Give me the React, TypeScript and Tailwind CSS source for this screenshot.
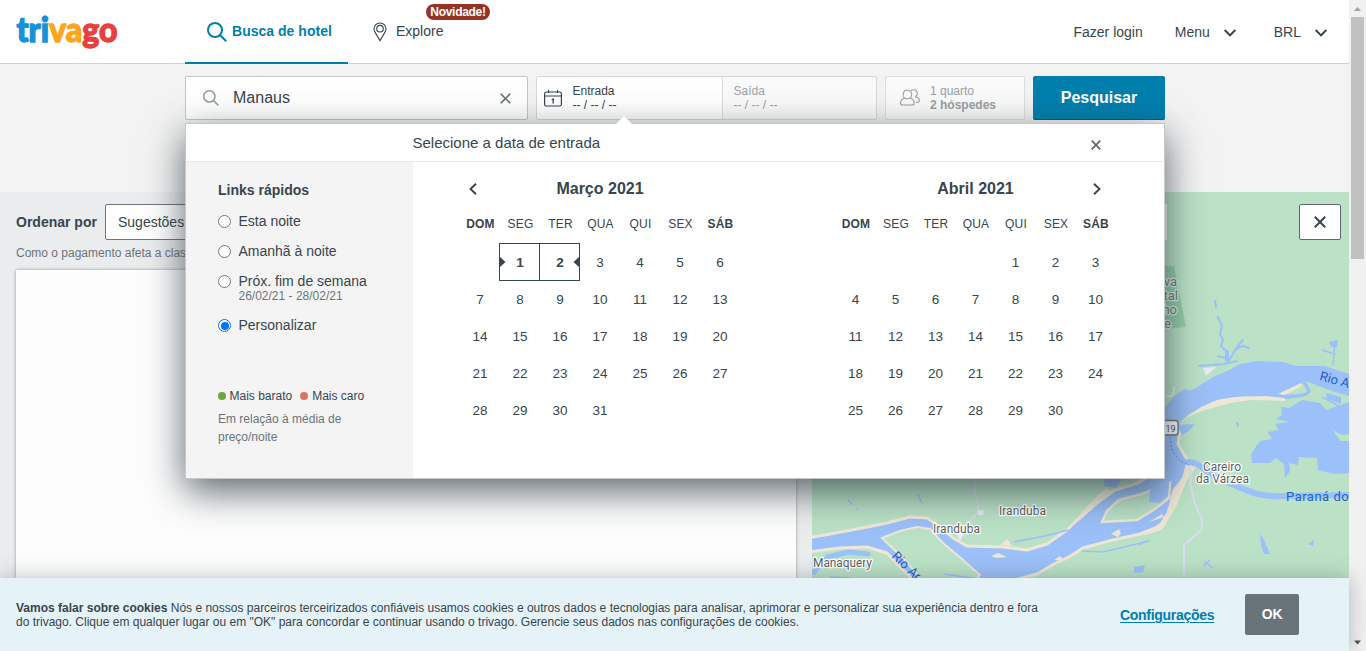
import React from "react";

type IconProps = { className?: string };

const Search = ({ className }: IconProps) => (
  <svg viewBox="0 0 20 20" className={className} fill="none" stroke="currentColor">
    <circle cx="8" cy="8" r="7" />
    <path d="M13 13 L19.2 19.2" />
  </svg>
);

const Chevron = ({ className }: IconProps) => (
  <svg viewBox="0 0 12 8" className={className} fill="none" stroke="currentColor" strokeWidth="2">
    <path d="M0.7 1 L6 6.4 L11.3 1" />
  </svg>
);

const Cross = ({ className }: IconProps) => (
  <svg viewBox="0 0 12 12" className={className} fill="none" stroke="currentColor">
    <path d="M0.8 0.8 L11.2 11.2 M11.2 0.8 L0.8 11.2" />
  </svg>
);

const Logo = () => (
  <svg width="108" height="50" viewBox="0 0 108 50" className="block overflow-visible">
    <text x="0.500" y="34.500" fontFamily="Lato, sans-serif" fontWeight="900" fontSize="34" strokeWidth="1.300" textLength="101" lengthAdjust="spacingAndGlyphs">
      <tspan fill="#1692d7" stroke="#1692d7">tri</tspan>
      <tspan fill="#ffa41c" stroke="#ffa41c">va</tspan>
      <tspan fill="#e5413e" stroke="#e5413e">go</tspan>
    </text>
  </svg>
);

const Header = () => (
  <header className="flex h-16 shrink-0 border-b border-[#cdd0d2] bg-white pl-4 text-[#37454d]">
    <div className="w-[169px] pt-[7px]"><Logo /></div>
    <div className="flex h-16 w-[163px] border-b-2 border-[#007fad] pl-[22px] pt-[22px] text-[#007fad]">
      <Search className="h-5 w-5 stroke-2" />
      <span className="ml-[5px] text-[14px] font-bold leading-[19px] tracking-[0.02px]">Busca de hotel</span>
    </div>
    <div className="relative flex pl-[25px] pt-[22px]">
      <svg width="14" height="20" viewBox="0 0 14 20" fill="none" stroke="currentColor" strokeWidth="1.100">
        <path d="M7 18.600 L2.300 10.600 C1.500 9.300 1 8.300 1 6.900 A6 5.900 0 0 1 13 6.900 C13 8.300 12.500 9.300 11.700 10.600Z" />
        <circle cx="7" cy="6.700" r="3.300" />
      </svg>
      <span className="ml-[9px] text-[14px] leading-[19px]">Explore</span>
      <span className="absolute left-[78px] top-1 flex h-4 w-16 items-center justify-center rounded-full bg-[#963323] text-[12px] font-bold tracking-[-0.300px] text-white">Novidade!</span>
    </div>
    <div className="ml-auto flex pr-[22px] pt-[23px] text-[14px] leading-[19px]">
      <span>Fazer login</span>
      <span className="ml-8 flex">Menu<Chevron className="ml-[14px] mt-[6px] h-2 w-3" /></span>
      <span className="ml-[38px] flex">BRL<Chevron className="ml-[14px] mt-[6px] h-2 w-3" /></span>
    </div>
  </header>
);

const SearchBar = () => (
  <div className="flex h-[128px] shrink-0 bg-[#f3f3f3] pl-[185px] pt-3 text-[#37454d]">
    <div className="flex h-11 w-[343px] items-center rounded-xs border border-[#c3c6c8] bg-white pl-[17px] pr-4">
      <Search className="h-4 w-4 stroke-2 text-[#9b9fa2]" />
      <span className="ml-[14px] text-[16px] leading-5">Manaus</span>
      <Cross className="ml-auto h-[11px] w-[11px] stroke-[1.6] text-[#5c666c]" />
    </div>
    <div className="ml-2 flex h-11 w-[341px] overflow-hidden rounded-xs border border-[#d5d7d9] bg-[#fafafa] text-[12px] leading-[14px]">
      <div className="flex w-[186px] border-r border-[#dcdedf] bg-white pl-[7px] pt-[7px]">
        <svg width="18" height="17" viewBox="0 0 18 17" className="mt-[6px]" fill="none" stroke="currentColor">
          <rect x="0.600" y="2" width="16.800" height="14" rx="1.800" strokeWidth="1.200" />
          <path d="M1 6 H17 M4.500 0 V3 M13.500 0 V3" strokeWidth="1.200" />
          <path d="M7.700 9.800 L9.200 9 V13.500" strokeWidth="1.300" />
        </svg>
        <div className="ml-[10.500px]"><div>Entrada</div><div>-- / -- / --</div></div>
      </div>
      <div className="pl-[10.500px] pt-[7px] text-[#9fa4a7]"><div>Saída</div><div>-- / -- / --</div></div>
    </div>
    <div className="ml-2 flex h-11 w-[140px] rounded-xs border border-[#dcdedf] bg-[#fafafa] pl-[14px] pt-[7px] text-[12px] leading-[14px] text-[#9b9fa2]">
      <svg width="20" height="17" viewBox="0 0 20 17" className="mt-[5px]" fill="none" stroke="currentColor" strokeWidth="1.100">
        <circle cx="7.400" cy="5.500" r="4.300" />
        <path d="M4.700 9 C2 9.700 .6 11.500 .6 14 C.6 15.500 1.500 16 2.500 16 H12.300 C13.500 16 14.200 15.300 14.200 14 C14.200 11.500 12.800 9.700 10.100 9" />
        <path d="M10.800 1.800 C13 -.3 17.300 .8 17.300 4.300 C17.300 6 16.700 7 15.700 7.800 C18 8.500 19.400 10 19.400 11.800 C19.400 12.800 18.700 13.200 17.800 13.200 H16" />
      </svg>
      <div className="ml-[10px]"><div>1 quarto</div><div className="font-bold">2 hóspedes</div></div>
    </div>
    <button className="ml-2 h-11 w-[132px] rounded-xs border-b border-[#005f81] bg-[#007fad] pt-px text-[16px] font-bold text-white">Pesquisar</button>
  </div>
);

const Results = () => (
  <section className="flex w-[812px] shrink-0 flex-col bg-[#ebeced] px-4 pt-3 text-[#37454d]">
    <div className="flex h-9 items-center">
      <span className="w-[89px] pt-px text-[14px] font-bold">Ordenar por</span>
      <div className="flex h-9 w-[200px] items-center rounded-xs border border-[#6c757b] bg-white pl-3 text-[14px]">Sugestões</div>
    </div>
    <p className="mt-[6px] text-[12px] leading-[14px] text-[#6b747a]">Como o pagamento afeta a classificação</p>
    <div className="mt-[10px] flex-1 bg-[#fdfdfd] shadow-[0_0_3px_rgba(55,69,77,0.5)]" />
  </section>
);

const Map = () => (
  <section className="relative min-w-0 flex-1 overflow-hidden">
    <svg width="537" height="386" viewBox="812 192 537 386" className="block">
      <rect x="812" y="192" width="537" height="386" fill="#bbe2c6" />
      <path d="M1140 266 H1174 L1186 327 L1140 331Z" fill="#94cfaa" />
      <g fill="#9cc0f9" stroke="#efe7d6" strokeWidth="3" strokeLinejoin="round">
        <path d="M808 538 L830 534 L857 529 L887 523 L910 517 L927 518 L941 527 L953 538 L967 546 L1003 547 L1027 550 L1047 544 L1067 530 L1083 514 L1100 498 L1115 490 L1138 483 L1160 470 L1160 430 L1180 430 L1178 444 L1188 461 L1184 477 L1177 489 L1168 513 L1160 526 L1140 534 L1113 540 L1083 548 L1069 557 L1054 564 L1037 574 L1007 582 L915 582 L887 553 L867 547 L840 548 L808 552Z" />
      </g>
      <path d="M1073 525 L1081 513 L1098 495 L1106 489 L1115 492 L1098 504 L1080 520Z M1173 489 L1183 477 L1190 465 L1196 467 L1187 480 L1177 505 L1162 530 L1140 536 L1165 520Z" fill="#efe7d6" />
      <path d="M1160 436 L1160 414 C1167 405 1173 396 1184 389 L1191 391 L1205 382 L1215 376 L1229 370 L1240 364 L1257 361 L1283 362 L1296 366 L1325 366 L1349 374 V396 L1326 389 L1306 381 L1311 391 C1308 399 1290 398 1272 400 L1246 396 L1218 400 L1202 408 L1190 413 L1180 422 L1178 436Z" fill="#9cc0f9" />
      <path d="M1179 424 L1188 416 L1201 407 L1217 400 L1235 397 L1266 396 L1285 398 V401 L1252 400 L1230 403 L1202 411 L1188 417Z" fill="#efe7d6" />
      <path d="M1278 394 L1303 382 L1308 391 C1306 396 1285 396 1278 394Z" fill="#bbe2c6" stroke="#9cc0f9" strokeWidth="1.500" />
      <path d="M1278 394 L1301 383 L1302 386 L1285 395Z" fill="#efe7d6" />
      <path d="M882 538 L900 531 L917 527 L930 529 L943 543 L963 560 L980 575 L976 579 L921 579 L905 560Z" fill="#bbe2c6" stroke="#efe7d6" strokeWidth="2" />
      <path d="M1102 522 L1107 511 L1119 500 L1142 494 L1170 483 L1169 498 L1155 509 L1137 520Z" fill="#bbe2c6" stroke="#efe7d6" strokeWidth="2.500" />
      <path d="M1150 490 L1169 482 L1168 496 L1160 503 L1149 502Z M1149 517 L1163 513 L1155 523Z" fill="#9cc0f9" />
      <path d="M991 556 L998 553 L1007 557 L996 558Z M1054 560 L1060 556 L1065 561Z M1111 534 L1119 529 L1121 533 L1118 537Z M1149 522 L1162 514 L1164 517Z M1000 545 L1007 539 L1012 546Z" fill="#efe7d6" />
      <path d="M1349 402 L1326 410 L1320 403 L1302 400 L1289 408 L1281 407 L1282 415 L1276 419 L1289 422 L1275 424 L1279 430 L1268 432 L1272 439 L1260 441 L1251 454 L1252 463 L1270 463 L1276 458 L1284 464 L1285 478 L1290 471 L1289 463 L1298 465 L1299 457 L1317 458 L1318 470 L1334 474 L1349 473Z" fill="#9cc0f9" />
      <path d="M1329 424 C1335 434 1343 436 1349 434 V441 L1340 441Z" fill="#bbe2c6" />
      <path d="M1326 393 L1341 397 L1341 404 L1327 399Z" fill="#9cc0f9" />
      <path d="M1322 397 L1350 412" stroke="#9cc0f9" strokeWidth="1.500" />
      <g fill="none" stroke="#9cc0f9" strokeLinecap="round" strokeLinejoin="round">
        <path d="M1187 462 C1202 461 1207 477 1232 484 C1252 493 1261 497 1282 496 L1349 495" strokeWidth="6" />
        <path d="M1228 362 L1226 351 L1221 346 L1223 340 L1220 334 L1222 326 L1218 317 M1216 307 L1215 301" strokeWidth="2" />
        <path d="M1228 362 L1237 347 L1243 340 M1236 349 L1243 346 L1249 348 M1226 358 L1218 356" strokeWidth="2" />
        <path d="M1227 352 L1227 360" strokeWidth="4" />
        <path d="M1322 350 L1334 354 L1335 343 M1334 354 L1333 365" strokeWidth="1.500" />
        <path d="M1172 404 L1193 390 M1199 366 L1224 364 L1237 361" strokeWidth="2" />
        <path d="M814 572 L828 557 L848 552 L868 554" strokeWidth="5" />
        <path d="M1014 542 L1045 536 L1068 530 M1082 551 L1103 552 L1149 541 M830 577 L850 578 M945 574 L978 579" strokeWidth="1.500" />
        <path d="M918 495 L922 503 M848 500 L852 504 M857 509 L858 510 M1204 566 L1210 560 M1205 562 L1213 568 M1140 545 L1145 541 M1100 510 L1105 503" strokeWidth="1.500" />
      </g>
      <g fill="#9cc0f9">
        <path d="M1329 342 L1338 340 L1337 347 L1331 347Z M1260 534 L1264 540 L1270 554 L1264 554 L1261 546Z M1308 544 L1314 540 L1313 546Z M1235 422 L1239 423 L1238 428Z M1177 425 L1195 424 L1189 431 L1182 435Z M1134 567 L1145 565 L1143 572 L1134 573Z M1104 478 L1121 480 L1116 488 L1104 486Z M1151 484 L1163 482 L1155 496Z" />
      </g>
      <path d="M1203 368 L1216 367 L1206 376Z" fill="#e8eaf6" />
      <g fill="none" stroke="#d8dcec" strokeWidth="2">
        <path d="M1190 468 L1191 488 L1195 504 L1202 519 L1202 529 L1184 545 V578" />
        <path d="M976 479 L974 490 L978 500 L978 512 L965 526 L957 539" strokeWidth="1.500" />
      </g>
      <path d="M977 510 L984 510 L983 515 L978 515Z M956 533 L965 532 L960 541Z" fill="#e8eaf6" />
      <path d="M1170 437 L1172 450 L1179 460 L1189 465" fill="none" stroke="#5b91ea" strokeDasharray="2 2" />
      <path d="M1174 386 C1175 394 1172 398 1166 396" fill="none" stroke="#e4f3e9" strokeWidth="1.500" />
      <rect x="1151" y="420.500" width="27" height="14.500" rx="3" fill="#fff" stroke="#6d7275" strokeWidth="1.300" />
      <g fontFamily="Roboto, sans-serif" fontSize="12" fill="#5a6066" stroke="#fff" strokeWidth="2.500" strokeLinejoin="round" paintOrder="stroke">
        <text x="999" y="515" textLength="47">Iranduba</text>
        <text x="933" y="533" textLength="47">Iranduba</text>
        <text x="813" y="566.500" textLength="59">Manaquery</text>
        <text x="1203" y="471" textLength="38">Careiro</text>
        <text x="1196" y="483" textLength="53">da Várzea</text>
        <g fontSize="13" fill="#62806e" stroke="#dff0e5">
          <text x="1177" y="285.500" textAnchor="end">Reserva</text>
          <text x="1178" y="300" textAnchor="end">Florestal</text>
          <text x="1177" y="314" textAnchor="end">Adolpho</text>
          <text x="1171" y="328" textAnchor="end">Ducke</text>
        </g>
      </g>
      <g fontFamily="Roboto, sans-serif" fontSize="13" fill="#2062c9">
        <text x="1319" y="380" transform="rotate(15 1319 380)">Rio A</text>
        <text x="891" y="557" transform="rotate(44 891 557)">Rio Ar</text>
        <text x="1286" y="500.500" letterSpacing="0.500">Paraná do</text>
      </g>
      <text x="1165.500" y="431.500" fontFamily="Roboto, sans-serif" fontSize="9" fill="#4e5559">19</text>
    </svg>
    <div className="absolute left-[200px] top-3 h-9 w-[155px] bg-white" />
    <button className="absolute right-2 top-3 flex h-9 w-[42px] items-center justify-center rounded-xs border border-[#5d686e] bg-white text-[#37454d]">
      <Cross className="h-3 w-3 stroke-2" />
    </button>
  </section>
);

const weekdays = ["DOM", "SEG", "TER", "QUA", "QUI", "SEX", "SÁB"];

const Month = ({ title, offset, days, range }: { title: string; offset: number; days: number; range?: boolean }) => (
  <div className="w-[281px] text-center">
    <div className="h-[34px] pt-[17px] text-[16px] font-bold leading-5">{title}</div>
    <div className="mt-[20px] grid grid-cols-[repeat(7,40px)] pl-px text-[12px] leading-4 tracking-[0.200px]">
      {weekdays.map((d, i) => <span key={d} className={i % 6 === 0 ? "font-bold" : ""}>{d}</span>)}
    </div>
    <div className="mt-[12px] grid auto-rows-[37px] grid-cols-[repeat(7,40px)] pl-[0.500px] text-[13.500px] leading-[37px]">
      {Array.from({ length: offset }, (_, i) => <span key={"e" + i} />)}
      {Array.from({ length: days }, (_, i) => {
        const d = i + 1;
        if (range && d < 3) {
          return (
            <span key={d} className="relative -ml-px -mt-px flex items-center justify-center border border-[#37454d] pl-px font-bold">
              {d}
              <svg width="6" height="10" viewBox="0 0 6 10" className={d === 1 ? "absolute left-0 top-[13px]" : "absolute right-0 top-[13px] rotate-180"}>
                <path d="M0 0 L5.500 5 L0 10Z" fill="#37454d" />
              </svg>
            </span>
          );
        }
        return <span key={d}>{d}</span>;
      })}
    </div>
  </div>
);

const QuickLink = ({ label, note, checked }: { label: string; note?: string; checked?: boolean }) => (
  <div className="flex">
    <span className={checked
      ? "mt-[3px] flex h-[13px] w-[13px] shrink-0 items-center justify-center rounded-full border border-[#0075ff] bg-white"
      : "mt-[3px] h-[13px] w-[13px] shrink-0 rounded-full border border-[#767676] bg-white"}>
      {checked && <span className="h-2 w-2 rounded-full bg-[#0075ff]" />}
    </span>
    <div className="ml-[7.500px] text-[14px] leading-[18px]">
      {label}
      {note && <div className="text-[12px] leading-3 text-[#6b747a]">{note}</div>}
    </div>
  </div>
);

const Popup = () => (
  <div className="absolute left-[185px] top-[123px] flex h-[356px] w-[980px] flex-col border border-[#c5c9cb] bg-white text-[#37454d] shadow-[0_12px_36px_rgba(45,58,65,0.78)]">
    <svg width="16" height="8" viewBox="0 0 16 8" className="absolute -top-2 left-[430px]"><path d="M0 8 L8 0 L16 8Z" fill="#fff" /></svg>
    <div className="flex h-[38px] shrink-0 border-b border-[#e9eaeb] pl-[226.500px] pr-[63px] text-[15px] leading-[38px]">
      <span>Selecione a data de entrada</span>
      <Cross className="ml-auto mt-[15.500px] h-[10px] w-[10px] stroke-[2] text-[#5c666c]" />
    </div>
    <div className="flex min-h-0 flex-1">
      <aside className="w-[227px] shrink-0 bg-[#f4f4f4] pl-8 pt-[19px]">
        <h2 className="text-[14px] font-bold leading-[18px]">Links rápidos</h2>
        <div className="mt-[13px] flex flex-col gap-3">
          <QuickLink label="Esta noite" />
          <QuickLink label="Amanhã à noite" />
          <QuickLink label="Próx. fim de semana" note="26/02/21 - 28/02/21" />
          <div className="mt-[2px]"><QuickLink label="Personalizar" checked /></div>
        </div>
        <div className="mt-[54px] flex items-center text-[12px] leading-4">
          <span className="mr-[3.500px] h-2 w-2 rounded-full bg-[#71a340]" />Mais barato
          <span className="ml-2 mr-1 h-2 w-2 rounded-full bg-[#db7562]" />Mais caro
        </div>
        <p className="mt-[6px] w-[150px] text-[12px] leading-[18px] text-[#6b747a]">Em relação à média de preço/noite</p>
      </aside>
      <div className="flex pl-[46.500px]">
        <svg width="8" height="12" viewBox="0 0 8 12" className="absolute left-[283px] top-[59px]" fill="none" stroke="currentColor" strokeWidth="1.900"><path d="M7 .7 L1.500 6 L7 11.300" /></svg>
        <Month title="Março 2021" offset={1} days={31} range />
        <div className="ml-[94.500px]"><Month title="Abril 2021" offset={4} days={30} /></div>
        <svg width="8" height="12" viewBox="0 0 8 12" className="absolute right-[63px] top-[59px]" fill="none" stroke="currentColor" strokeWidth="1.900"><path d="M1 .7 L6.500 6 L1 11.300" /></svg>
      </div>
    </div>
  </div>
);

const CookieBar = () => (
  <footer className="relative flex h-[73px] shrink-0 bg-[#e5f2f7] pl-4 text-[#37454d] shadow-[0_0_20px_rgba(55,69,77,0.35)]">
    <p className="w-[1050px] shrink-0 pt-[23px] text-[12px] leading-[14px]">
      <b>Vamos falar sobre cookies</b> Nós e nossos parceiros terceirizados confiáveis usamos cookies e outros dados e tecnologias para analisar, aprimorar e personalizar sua experiência dentro e fora<br />
      do trivago. Clique em qualquer lugar ou em "OK" para concordar e continuar usando o trivago. Gerencie seus dados nas configurações de cookies.
    </p>
    <a className="ml-[54px] mt-[27px] h-5 w-[93px] text-[14px] font-bold leading-5 tracking-[-0.300px] text-[#007fad] underline underline-offset-2">Configurações</a>
    <button className="ml-8 mt-4 h-[41px] w-[54px] rounded-xs bg-[#69737a] text-[14px] font-bold tracking-[-0.300px] text-white">OK</button>
  </footer>
);

const Scrollbar = () => (
  <div className="flex w-[17px] shrink-0 flex-col items-center bg-[#f1f1f1]">
    <svg width="17" height="17" viewBox="0 0 17 17"><path d="M5 11 L8.500 7 L12 11Z" fill="#a3a3a3" /></svg>
    <div className="h-[242px] w-[13px] bg-[#c1c1c1]" />
    <svg width="17" height="17" viewBox="0 0 17 17" className="mt-auto"><path d="M5 6.500 L8.500 10.500 L12 6.500Z" fill="#505050" /></svg>
  </div>
);

export default function App() {
  return (
    <div className="flex h-[651px] w-[1366px] overflow-hidden font-['Liberation_Sans',Arial,sans-serif]">
      <div className="relative flex w-[1349px] shrink-0 flex-col">
        <Header />
        <SearchBar />
        <div className="flex min-h-0 flex-1">
          <Results />
          <Map />
        </div>
        <Popup />
        <CookieBar />
      </div>
      <Scrollbar />
    </div>
  );
}
